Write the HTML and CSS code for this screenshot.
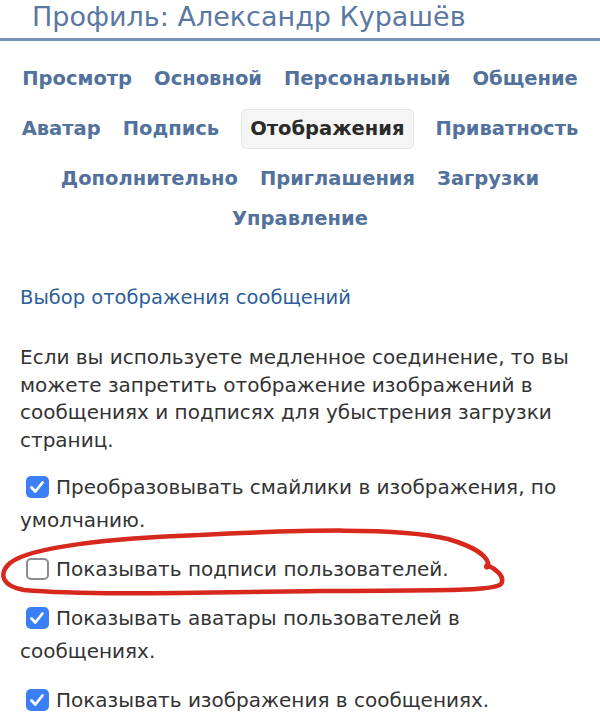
FILE: index.html
```html
<!DOCTYPE html>
<html lang="ru">
<head>
<meta charset="utf-8">
<title>Профиль</title>
<link rel="stylesheet" href="styles.css">
</head>
<body>
<div class="page">
  <header class="header">
    <h1 class="title">Профиль: Александр Курашёв</h1>
  </header>

  <nav class="tabs">
    <div class="tab-row">
      <a class="tab">Просмотр</a>
      <a class="tab">Основной</a>
      <a class="tab">Персональный</a>
      <a class="tab">Общение</a>
    </div>
    <div class="tab-row">
      <a class="tab">Аватар</a>
      <a class="tab">Подпись</a>
      <a class="tab tab-active">Отображения</a>
      <a class="tab">Приватность</a>
    </div>
    <div class="tab-row">
      <a class="tab">Дополнительно</a>
      <a class="tab">Приглашения</a>
      <a class="tab">Загрузки</a>
    </div>
    <div class="tab-row tab-row-last">
      <a class="tab">Управление</a>
    </div>
  </nav>

  <section class="content">
    <h2 class="section-title">Выбор отображения сообщений</h2>
    <p class="intro">Если вы используете медленное соединение, то вы можете запретить отображение изображений в сообщениях и подписях для убыстрения загрузки страниц.</p>

    <div class="options">
      <p class="option"><span class="cb cb-on"><svg viewBox="0 0 22 22" class="tick"><path d="M5.5 11.5 L9.3 15.5 L16.5 6.5"/></svg></span>Преобразовывать смайлики в изображения, по умолчанию.</p>
      <p class="option"><span class="cb cb-off"></span>Показывать подписи пользователей.</p>
      <p class="option"><span class="cb cb-on"><svg viewBox="0 0 22 22" class="tick"><path d="M5.5 11.5 L9.3 15.5 L16.5 6.5"/></svg></span>Показывать аватары пользователей в сообщениях.</p>
      <p class="option"><span class="cb cb-on"><svg viewBox="0 0 22 22" class="tick"><path d="M5.5 11.5 L9.3 15.5 L16.5 6.5"/></svg></span>Показывать изображения в сообщениях.</p>
    </div>
  </section>

  <svg class="annotation" viewBox="0 0 600 724" width="600" height="724">
    <path d="M200 535 C300 530 400 527 448 539 C472 546 486 555 488 563 C490 569 484 568 487 565 C494 568 506 576 501 584 C494 592 420 590 320 591 C220 592 90 596 24 590 C2 586 -2 574 10 563 C30 547 110 538 200 535"/>
  </svg>
</div>
</body>
</html>
```

FILE: styles.css
```css
html, body {
  margin: 0;
  padding: 0;
  background: #ffffff;
}

body {
  font-family: "DejaVu Sans", Verdana, sans-serif;
  color: #333333;
  width: 600px;
  height: 724px;
  overflow: hidden;
}

.page {
  position: relative;
  width: 600px;
  height: 724px;
}

.header {
  height: 38px;
  border-bottom: 3px solid #7690bc;
  padding-left: 32px;
}

.title {
  margin: 0;
  font-size: 27px;
  font-weight: normal;
  line-height: 34px;
  color: #5a78a3;
  white-space: nowrap;
}

.tabs {
  display: flex;
  flex-direction: column;
  row-gap: 10px;
  padding-top: 18px;
}

.tab-row {
  display: flex;
  justify-content: center;
  align-items: center;
  column-gap: 22px;
  height: 40px;
}

.tab-row-last {
  margin-top: -10px;
}

.tab {
  font-size: 19.5px;
  font-weight: bold;
  color: #52719c;
  line-height: 38px;
  white-space: nowrap;
}

.tab-active {
  padding: 0 8px;
  background: #f5f5f5;
  border: 1px solid #e7e7e7;
  border-radius: 5px;
  color: #2a2a2a;
}

.content {
  padding: 0 20px;
}

.section-title {
  margin: 46px 0 0;
  font-size: 19.5px;
  font-weight: normal;
  line-height: 26px;
  color: #2d5e99;
}

.intro {
  margin: 33px 0 0;
  font-size: 20px;
  line-height: 27.5px;
  color: #333333;
}

.options {
  margin-top: 17px;
}

.option {
  margin: 0 0 16px;
  font-size: 20px;
  line-height: 33px;
  color: #333333;
}

.cb {
  display: inline-block;
  box-sizing: border-box;
  width: 23px;
  height: 22px;
  border-radius: 5px;
  margin-left: 6px;
  margin-right: 7px;
  vertical-align: -4px;
}

.cb-on {
  background: #3a7ff5;
}

.cb-off {
  background: #ffffff;
  border: 2px solid #8b8b90;
}

.tick {
  display: block;
  width: 22px;
  height: 22px;
}

.tick path {
  fill: none;
  stroke: #ffffff;
  stroke-width: 2.8;
  stroke-linecap: round;
  stroke-linejoin: round;
}

.annotation {
  position: absolute;
  left: 0;
  top: 0;
  pointer-events: none;
}

.annotation path {
  fill: none;
  stroke: #d7281e;
  stroke-width: 4.5;
  stroke-linecap: round;
  stroke-linejoin: round;
}
```
